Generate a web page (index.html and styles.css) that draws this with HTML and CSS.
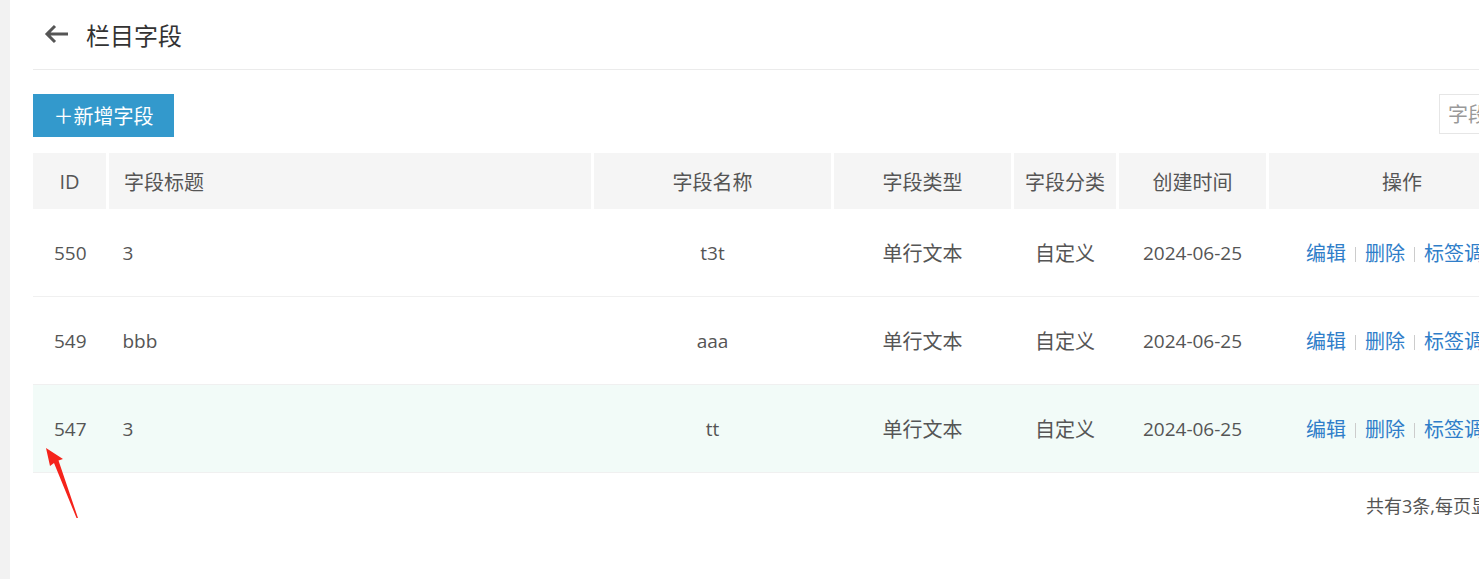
FILE: index.html
```html
<!DOCTYPE html>
<html>
<head>
    <meta charset="utf-8">
    <title>栏目字段</title>
    <link rel="stylesheet" href="styles.css">
</head>
<body>

<div class="side"></div>

<div class="main">
    <div class="title-bar">
        <a class="back" href="#">
            <svg width="26" height="20" viewBox="0 0 26 20">
                <path d="M24 10H3M11 2L3 10l8 8" fill="none" stroke="#555" stroke-width="3" stroke-linejoin="miter"/>
            </svg>
        </a>
        <h1>栏目字段</h1>
    </div>

    <div class="toolbar">
        <button class="btn">＋新增字段</button>
        <input class="search" type="text" placeholder="字段标题">
    </div>

    <table class="grid">
        <thead>
            <tr>
                <th class="c-id">ID</th>
                <th class="c-title left">字段标题</th>
                <th class="c-name">字段名称</th>
                <th class="c-type">字段类型</th>
                <th class="c-cat">字段分类</th>
                <th class="c-date">创建时间</th>
                <th class="c-op">操作</th>
            </tr>
        </thead>
        <tbody>
            <tr>
                <td>550</td>
                <td class="left">3</td>
                <td>t3t</td>
                <td class="cn">单行文本</td>
                <td class="cn">自定义</td>
                <td>2024-06-25</td>
                <td class="ops"><a href="#">编辑</a><i></i><a href="#">删除</a><i></i><a href="#">标签调用</a></td>
            </tr>
            <tr>
                <td>549</td>
                <td class="left">bbb</td>
                <td>aaa</td>
                <td class="cn">单行文本</td>
                <td class="cn">自定义</td>
                <td>2024-06-25</td>
                <td class="ops"><a href="#">编辑</a><i></i><a href="#">删除</a><i></i><a href="#">标签调用</a></td>
            </tr>
            <tr class="hover">
                <td>547</td>
                <td class="left">3</td>
                <td>tt</td>
                <td class="cn">单行文本</td>
                <td class="cn">自定义</td>
                <td>2024-06-25</td>
                <td class="ops"><a href="#">编辑</a><i></i><a href="#">删除</a><i></i><a href="#">标签调用</a></td>
            </tr>
        </tbody>
    </table>

    <div class="pager">共有3条,每页显示10条</div>
</div>

<!-- стрелка-пометка со скриншота -->
<svg class="mark" width="40" height="74" viewBox="0 0 40 74">
    <path d="M2 2L19 13 14.5 14.5 34 72 32.5 72 10 17 6 20Z" fill="#f5231b"/>
</svg>

</body>
</html>
```

FILE: styles.css
```css
body {
    margin: 0;
    font-family: "Open Sans", "Noto Sans CJK SC", sans-serif;
    font-size: 19px;
    color: #555;
    background: #fff;
    overflow: hidden;
    width: 1479px;
    height: 579px;
    position: relative;
}

.side {
    position: absolute;
    left: 0;
    top: 0;
    width: 10px;
    height: 579px;
    background: #f2f2f2;
}

.main {
    padding-left: 33px;
    width: 1560px;
}

.title-bar {
    display: flex;
    align-items: center;
    height: 69px;
    border-bottom: 1px solid #ebebeb;
    padding-left: 11px;
}

.back {
    display: flex;
    margin-top: -1px;
}

.title-bar h1 {
    margin: 0 0 0 16px;
    font-size: 24px;
    font-weight: normal;
    color: #333;
    margin-top: -1px;
}

.toolbar {
    display: flex;
    align-items: flex-start;
    margin-top: 24px;
    height: 59px;
}

.btn {
    flex-shrink: 0;
    background: #3399cc;
    color: #fff;
    border: none;
    height: 43px;
    width: 141px;
    font-family: "Open Sans", "Noto Sans CJK SC", sans-serif;
    font-size: 20px;
    padding: 0;
    white-space: nowrap;
}

.search {
    flex-shrink: 0;
    margin-left: 1265px;
    height: 38px;
    width: 200px;
    border: 1px solid #e6e6e6;
    padding: 0 0 0 8px;
    font-family: "Open Sans", "Noto Sans CJK SC", sans-serif;
    font-size: 20px;
    outline: none;
}

.search::placeholder {
    color: #999;
}

.grid {
    border-collapse: collapse;
    table-layout: fixed;
    width: 1505px;
}

.grid th {
    background: #f5f5f5;
    height: 56px;
    font-weight: normal;
    font-size: 20px;
    color: #555;
    border-right: 3px solid #fff;
    padding: 0;
}

.grid td {
    height: 87px;
    text-align: center;
    border-bottom: 1px solid #f0f0f0;
    padding: 0;
}

.grid .left {
    text-align: left;
    padding-left: 15px;
}

.grid .cn {
    font-size: 20px;
}

.c-id { width: 73px; }
.c-title { width: 467px; }
.c-name { width: 237px; }
.c-type { width: 177px; }
.c-cat { width: 102px; }
.c-date { width: 147px; }
.c-op { width: 266px; }

.grid tr.hover td {
    background: #f2fbf8;
}

.grid .ops {
    white-space: nowrap;
    font-size: 20px;
    padding-left: 6px;
}

.ops a {
    color: #2f7ec9;
    text-decoration: none;
}

.ops i {
    display: inline-block;
    width: 1px;
    height: 15px;
    background: #ccc;
    margin: 0 9px;
    vertical-align: -1px;
}

.pager {
    width: 1446px;
    padding-left: 1333px;
    margin-top: 19px;
    font-size: 18px;
    color: #555;
    white-space: nowrap;
}

.mark {
    position: absolute;
    left: 44px;
    top: 446px;
}
```
